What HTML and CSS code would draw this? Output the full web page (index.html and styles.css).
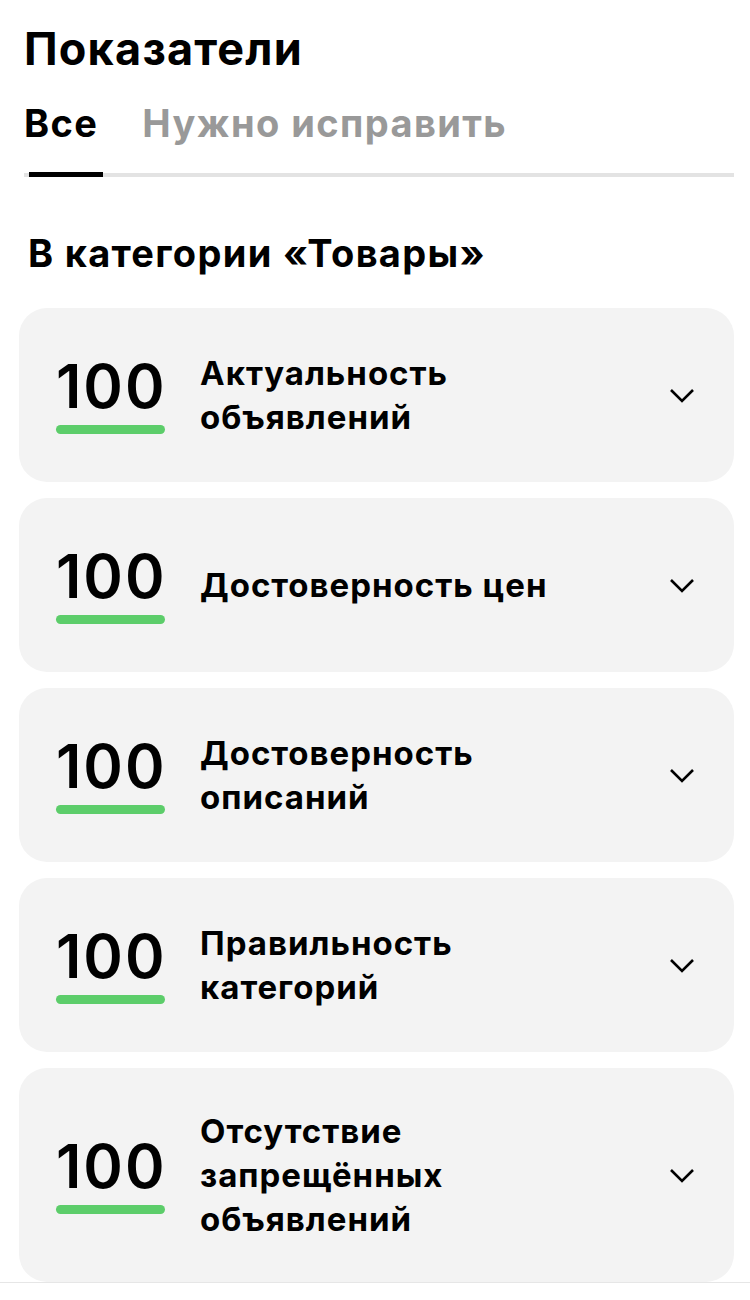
FILE: index.html
```html
<!DOCTYPE html>
<html lang="ru">
<head>
    <meta charset="UTF-8">
    <meta name="viewport" content="width=device-width, initial-scale=1.0">
    <title>Показатели</title>
    <link rel="stylesheet" href="styles.css">
</head>
<body>
    <div class="page">
        <h1 class="title">Показатели</h1>
        <div class="tabs">
            <span class="tab active">Все</span>
            <span class="tab">Нужно исправить</span>
        </div>
        <div class="tabs-line"><div class="tabs-marker"></div></div>

        <h2 class="section">В категории «Товары»</h2>

        <div class="cards">
            <div class="card">
                <div class="score"><span class="score-num">100</span><div class="score-bar"></div></div>
                <div class="card-label">Актуальность<br>объявлений</div>
                <svg class="chevron" width="26" height="16" viewBox="0 0 26 16"><path d="M2 3l11 11L24 3" fill="none" stroke="#000" stroke-width="2.6"/></svg>
            </div>
            <div class="card">
                <div class="score"><span class="score-num">100</span><div class="score-bar"></div></div>
                <div class="card-label">Достоверность цен</div>
                <svg class="chevron" width="26" height="16" viewBox="0 0 26 16"><path d="M2 3l11 11L24 3" fill="none" stroke="#000" stroke-width="2.6"/></svg>
            </div>
            <div class="card">
                <div class="score"><span class="score-num">100</span><div class="score-bar"></div></div>
                <div class="card-label">Достоверность<br>описаний</div>
                <svg class="chevron" width="26" height="16" viewBox="0 0 26 16"><path d="M2 3l11 11L24 3" fill="none" stroke="#000" stroke-width="2.6"/></svg>
            </div>
            <div class="card">
                <div class="score"><span class="score-num">100</span><div class="score-bar"></div></div>
                <div class="card-label">Правильность<br>категорий</div>
                <svg class="chevron" width="26" height="16" viewBox="0 0 26 16"><path d="M2 3l11 11L24 3" fill="none" stroke="#000" stroke-width="2.6"/></svg>
            </div>
            <div class="card">
                <div class="score"><span class="score-num">100</span><div class="score-bar"></div></div>
                <div class="card-label">Отсутствие<br>запрещённых<br>объявлений</div>
                <svg class="chevron" width="26" height="16" viewBox="0 0 26 16"><path d="M2 3l11 11L24 3" fill="none" stroke="#000" stroke-width="2.6"/></svg>
            </div>
        </div>
    </div>
    <div class="bottom-line"></div>
</body>
</html>
```

FILE: styles.css
```css
body {
    margin: 0;
    padding: 0;
    background: #fff;
    color: #000;
    font-family: Inter, Roboto, "Noto Sans", sans-serif;
}

.page {
    padding: 21px 16px 0 19px;
}

.title {
    margin: 0 0 0 5px;
    font-size: 45px;
    font-weight: 700;
    line-height: 56px;
    letter-spacing: 1.2px;
}

.tabs {
    display: flex;
    gap: 44px;
    margin: 22px 0 0 5px;
}

.tab {
    font-size: 38px;
    font-weight: 700;
    line-height: 48px;
    letter-spacing: 1.4px;
    color: #999;
}

.tab.active {
    color: #000;
}

.tabs-line {
    margin: 26px 0 0 5px;
    height: 4px;
    background: #e3e3e3;
}

.tabs-marker {
    width: 74px;
    height: 5px;
    margin-left: 5px;
    position: relative;
    top: -1px;
    background: #000;
}

.section {
    margin: 52px 0 0 9px;
    font-size: 38px;
    font-weight: 700;
    line-height: 48px;
    letter-spacing: 1.3px;
}

.cards {
    display: flex;
    flex-direction: column;
    gap: 16px;
    margin-top: 31px;
}

.card {
    display: flex;
    align-items: center;
    min-height: 174px;
    box-sizing: border-box;
    padding: 41px 39px 41px 37px;
    background: #f3f3f3;
    border-radius: 28px;
}

.score {
    width: 109px;
    flex-shrink: 0;
}

.score-num {
    display: block;
    font-size: 60px;
    font-weight: 600;
    line-height: 60px;
    letter-spacing: 2px;
}

.score-bar {
    margin-top: 9px;
    height: 9px;
    border-radius: 5px;
    background: #5ccd6a;
}

.card-label {
    flex: 1;
    margin-left: 35px;
    font-size: 33px;
    font-weight: 700;
    line-height: 44px;
    letter-spacing: 1px;
}

.chevron {
    flex-shrink: 0;
    display: block;
}

.bottom-line {
    height: 1px;
    background: #e6e6e6;
}
```
